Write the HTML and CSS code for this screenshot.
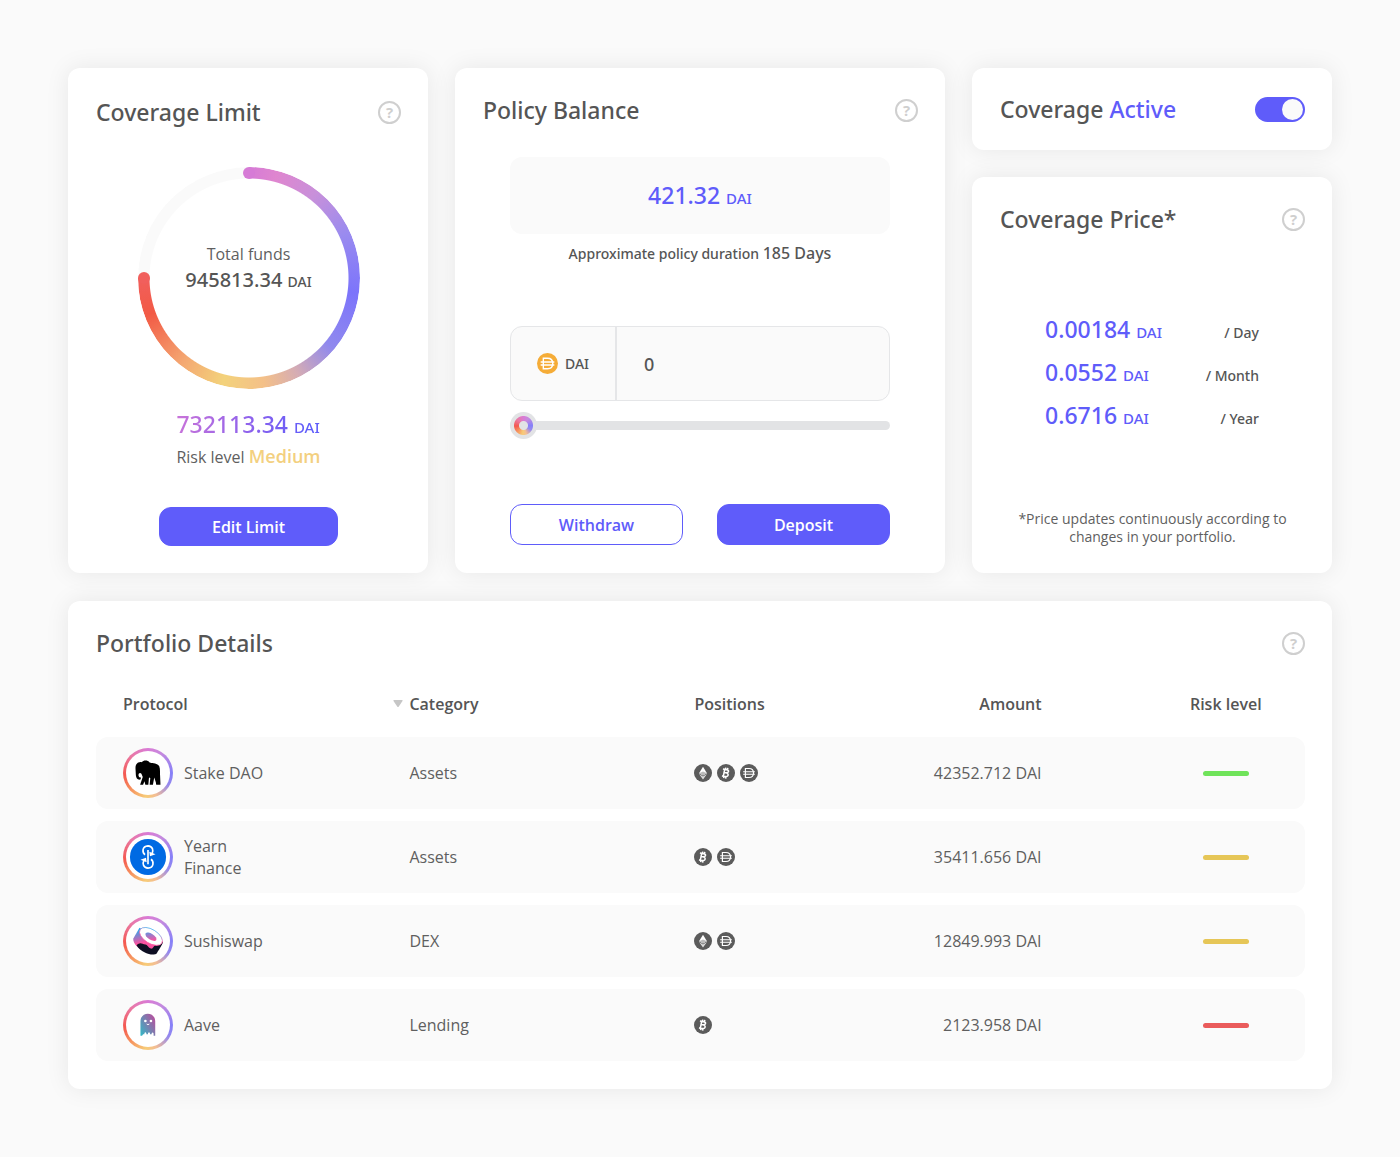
FILE: index.html
```html
<!DOCTYPE html>
<html lang="en">
<head>
<meta charset="utf-8">
<meta name="viewport" content="width=device-width, initial-scale=1">
<title>Coverage dashboard</title>
<link rel="stylesheet" href="styles.css">
</head>
<body>
<svg class="sprite" aria-hidden="true">
  <symbol id="coin-dai" viewBox="0 0 20 20">
    <circle cx="10" cy="10" r="10" fill="currentColor"/>
    <path d="M6 5h4c3 0 5 2 5 5s-2 5-5 5H6zM3.500 8.600h13M3.500 11.400h13" fill="none" stroke="#fff" stroke-width="1.300"/>
  </symbol>
  <symbol id="coin-btc" viewBox="0 0 20 20">
    <circle cx="10" cy="10" r="10" fill="currentColor"/>
    <path d="M8.600 5.800 7 13.800M6.600 5.600l4 .7c3.400.6 2.800 3.600-.6 3.400l-1.500-.2M10 9.800c3.600.6 3 4.600-.8 4.100l-3.700-.5M9.800 4l-.4 2M12 4.400l-.4 2M7.800 13.800l-.4 2M10 14.200l-.4 2" fill="none" stroke="#fff" stroke-width="1.700"/>
  </symbol>
  <symbol id="coin-eth" viewBox="0 0 20 20">
    <circle cx="10" cy="10" r="10" fill="currentColor"/>
    <path d="M10 3l4.400 7.200L10 12.700l-4.400-2.500z" fill="#fff"/>
    <path d="M5.600 11.200 10 13.800l4.400-2.600L10 17.200z" fill="#ddd"/>
    <path d="M5.600 10.200 10 8.300l4.400 1.900L10 12.700z" fill="#bbb"/>
  </symbol>
</svg>

<main class="dashboard">
  <section class="card limit">
    <header class="card-head">
      <h2>Coverage Limit</h2>
      <button class="help" type="button" aria-label="About coverage limit">?</button>
    </header>
    <div class="gauge">
      <div class="gauge-arc"></div>
      <p class="gauge-label">Total funds</p>
      <p class="gauge-value">945813.34 <small>DAI</small></p>
    </div>
    <div class="limit-info">
      <p class="limit-value">732113.34 <small>DAI</small></p>
      <p class="limit-risk">Risk level <strong>Medium</strong></p>
    </div>
    <button class="btn btn-edit" type="button">Edit Limit</button>
  </section>

  <section class="card policy">
    <header class="card-head">
      <h2>Policy Balance</h2>
      <button class="help" type="button" aria-label="About policy balance">?</button>
    </header>
    <div class="policy-body">
      <p class="balance amount">421.32 <small>DAI</small></p>
      <p class="duration">Approximate policy duration <strong>185 Days</strong></p>
      <div class="field">
        <label class="field-unit" for="amount"><svg class="unit-icon" aria-hidden="true"><use href="#coin-dai"/></svg>DAI</label>
        <input class="field-input" id="amount" type="text" inputmode="decimal" value="0">
      </div>
      <input class="slider" type="range" min="0" max="100" value="0" aria-label="Amount in DAI">
      <div class="actions">
        <button class="btn btn-outline" type="button">Withdraw</button>
        <button class="btn" type="button">Deposit</button>
      </div>
    </div>
  </section>

  <div class="side">
    <section class="card status">
      <h2><label for="active">Coverage <span class="accent">Active</span></label></h2>
      <input class="toggle" id="active" type="checkbox" role="switch" checked>
    </section>
    <section class="card price">
      <header class="card-head">
        <h2>Coverage Price*</h2>
        <button class="help" type="button" aria-label="About coverage price">?</button>
      </header>
      <dl class="prices">
        <div><dt>/ Day</dt><dd class="amount">0.00184 <small>DAI</small></dd></div>
        <div><dt>/ Month</dt><dd class="amount">0.0552 <small>DAI</small></dd></div>
        <div><dt>/ Year</dt><dd class="amount">0.6716 <small>DAI</small></dd></div>
      </dl>
      <p class="note">*Price updates continuously according to changes in your portfolio.</p>
    </section>
  </div>

  <section class="card portfolio">
    <header class="card-head">
      <h2>Portfolio Details</h2>
      <button class="help" type="button" aria-label="About portfolio details">?</button>
    </header>
    <table>
      <thead>
        <tr>
          <th class="col-protocol" scope="col">Protocol</th>
          <th class="col-category" scope="col" aria-sort="descending"><button class="sort" type="button"><svg viewBox="0 0 10 8" aria-hidden="true"><path d="M1 0h8q1 0 .5 1L5.800 6.500q-.8 1-1.600 0L.5 1Q0 0 1 0z"/></svg>Category</button></th>
          <th class="col-positions" scope="col">Positions</th>
          <th class="col-amount" scope="col">Amount</th>
          <th class="col-risk" scope="col">Risk level</th>
        </tr>
      </thead>
      <tbody>
        <tr>
          <td><div class="protocol">
            <span class="logo"><svg viewBox="121 393 134 134" aria-hidden="true">
              <path d="M150 448C149 434 156 425 169 427C174 421 187 420 193 428C204 431 217 430 222 439C226 449 224 460 225 472L226 496H213L212 489L207 474L203 496H193L195 475L191 474L189 496H180L177 485L173 496H164L172 472L168 462C164 458 159 460 159 467C160 473 163 474 167 474L165 480C156 482 152 476 151 467Z"/>
            </svg></span><span>Stake DAO</span></div></td>
          <td class="col-category">Assets</td>
          <td><div class="coins"><svg role="img" aria-label="ETH"><use href="#coin-eth"/></svg><svg role="img" aria-label="BTC"><use href="#coin-btc"/></svg><svg role="img" aria-label="DAI"><use href="#coin-dai"/></svg></div></td>
          <td class="col-amount">42352.712 DAI</td>
          <td class="col-risk"><span class="risk risk-low" role="img" aria-label="Low"></span></td>
        </tr>
        <tr>
          <td><div class="protocol">
            <span class="logo"><svg viewBox="121 644 134 134" aria-hidden="true">
              <circle cx="188" cy="711" r="55" fill="#006ae3"/>
              <g fill="none" stroke="#fff" stroke-width="5">
                <path d="M188 690V733"/>
                <path d="M179 704C170 698 169 678 188 677C202 678 206 690 200 702"/>
                <path d="M197 718C206 724 207 744 188 745C174 744 170 732 176 720"/>
              </g>
              <path d="M192 695l19 8-17 6zM184 727l-19-8 17-6z" fill="#fff"/>
            </svg></span><span>Yearn<br>Finance</span></div></td>
          <td class="col-category">Assets</td>
          <td><div class="coins"><svg role="img" aria-label="BTC"><use href="#coin-btc"/></svg><svg role="img" aria-label="DAI"><use href="#coin-dai"/></svg></div></td>
          <td class="col-amount">35411.656 DAI</td>
          <td class="col-risk"><span class="risk risk-medium" role="img" aria-label="Medium"></span></td>
        </tr>
        <tr>
          <td><div class="protocol">
            <span class="logo"><svg viewBox="121 86 134 134" aria-hidden="true">
              <defs>
                <linearGradient id="roll" x1="0" y1="0" x2="0.300" y2="1"><stop offset="0" stop-color="#03b8ff"/><stop offset=".65" stop-color="#fa52a0"/></linearGradient>
                <linearGradient id="filling" x1="0" y1="0" x2="1" y2="0.500"><stop offset="0" stop-color="#4f9be8"/><stop offset="1" stop-color="#fa52a0"/></linearGradient>
              </defs>
              <path d="M162 113L143 146C142 162 162 180 184 186L216 182L234 155Z" fill="url(#roll)"/>
              <path d="M153 166C155 163 158 161 161 161C166 158 172 162 180 164C188 166 189 175 197 176C205 178 204 167 211 167C221 168 229 163 234 154C233 163 224 176 215 190C209 197 192 195 180 189C168 183 158 175 153 166Z" fill="#0e0f23"/>
              <ellipse cx="197" cy="139" rx="39" ry="21" transform="rotate(32 197 139)" fill="#fff" stroke="url(#roll)" stroke-width="2"/>
              <ellipse cx="197" cy="140" rx="19" ry="9" transform="rotate(32 197 140)" fill="url(#filling)"/>
            </svg></span><span>Sushiswap</span></div></td>
          <td class="col-category">DEX</td>
          <td><div class="coins"><svg role="img" aria-label="ETH"><use href="#coin-eth"/></svg><svg role="img" aria-label="DAI"><use href="#coin-dai"/></svg></div></td>
          <td class="col-amount">12849.993 DAI</td>
          <td class="col-risk"><span class="risk risk-medium" role="img" aria-label="Medium"></span></td>
        </tr>
        <tr>
          <td><div class="protocol">
            <span class="logo"><svg viewBox="121 338 134 134" aria-hidden="true">
              <defs><linearGradient id="ghost" x1="0" y1="1" x2="1" y2="0.200"><stop offset="0" stop-color="#2ebac6"/><stop offset="1" stop-color="#b6509e"/></linearGradient></defs>
              <path d="M165 394C165 363 210 363 210 394V438H205V431Q202 424 199 431V433H194V430Q191 424 188 430V433H183V430Q180 424 177 430V433H173L170 438H165Z" fill="url(#ghost)"/>
              <g fill="#fff"><circle cx="180" cy="393" r="4"/><circle cx="197" cy="393" r="4"/></g>
              <path d="M184 402Q188 406 192 402" fill="none" stroke="#fff" stroke-width="3"/>
            </svg></span><span>Aave</span></div></td>
          <td class="col-category">Lending</td>
          <td><div class="coins"><svg role="img" aria-label="BTC"><use href="#coin-btc"/></svg></div></td>
          <td class="col-amount">2123.958 DAI</td>
          <td class="col-risk"><span class="risk risk-high" role="img" aria-label="High"></span></td>
        </tr>
      </tbody>
    </table>
  </section>
</main>
</body>
</html>
```
FILE: styles.css
```css
:root {
  --ink: #555;
  --soft: #5f5f5f;
  --accent: #5f5cfa;
  --panel: #fafafa;
  --medium: "Noto Sans", "Open Sans", sans-serif;
  --ring: conic-gradient(#d97bd6, #c58ade 35deg, #8680f8 90deg, #9589ee 120deg, #f3bd94 160deg, #f7cc78 185deg, #f6945f 225deg, #f4584f 265deg, #ea78a4 315deg, #d97bd6);
}

* { box-sizing: border-box; }

body {
  margin: 0;
  background: #fafafa;
  color: var(--ink);
  font: 16px/24px "Open Sans", "Noto Sans", sans-serif;
}

h2, p, dl, dd { margin: 0; }
h2 { font-family: var(--medium); font-size: 23px; line-height: 32px; font-weight: 500; }
button, input { font: inherit; color: inherit; }
button { cursor: pointer; }
small, strong { line-height: 1; }
small { font-size: 15px; }
.sprite { display: none; }
.accent { color: var(--accent); }

.dashboard {
  display: grid;
  grid-template-columns: minmax(0, 360fr) minmax(0, 490fr) minmax(0, 360fr);
  gap: 28px 27px;
  padding: 68px;
}

.card {
  display: flex;
  flex-direction: column;
  padding: 26px 27px 27px 28px;
  border-radius: 12px;
  background: #fff;
  box-shadow: 0 0 24px rgba(0, 0, 0, 0.08);
}

.card-head {
  display: flex;
  align-items: center;
  justify-content: space-between;
}

.help {
  width: 23px;
  height: 23px;
  padding: 0;
  border: 2px solid #cfcfcf;
  border-radius: 50%;
  background: none;
  color: #cfcfcf;
  font-size: 15px;
  line-height: 18px;
  font-weight: 700;
}

.btn {
  height: 41px;
  border: 1px solid var(--accent);
  border-radius: 12px;
  background: var(--accent);
  color: #fff;
  font-weight: 600;
}

.btn-outline { background: #fff; color: var(--accent); }

.amount { color: var(--accent); font-family: var(--medium); font-size: 23px; font-weight: 500; }

/* Coverage limit */
.limit { align-items: center; padding-top: 28px; }
.limit .card-head { align-self: stretch; }

.gauge {
  position: relative;
  display: flex;
  flex-direction: column;
  align-items: center;
  width: 222px;
  height: 222px;
  margin-top: 39px;
  padding-top: 75px;
}

.gauge-arc {
  position: absolute;
  inset: 0;
  border-radius: 50%;
  background: conic-gradient(#d67bd6, #df86cf 15deg, #c890da 38deg, #9a8bef 65deg, #7c74fb 98deg, #9089ee 130deg, #d5acb4 153deg, #f4c088 172deg, #f3d27b 194deg, #f4a872 218deg, #f25a45 250deg, #f15f5c 270deg, #fafafa 270deg);
  -webkit-mask: radial-gradient(circle, transparent 99px, #000 100px);
  mask: radial-gradient(circle, transparent 99px, #000 100px);
}

/* round caps at both ends of the arc */
.gauge::before,
.gauge::after {
  content: "";
  position: absolute;
  z-index: 1;
  width: 12px;
  height: 12px;
  border-radius: 50%;
}
.gauge::before { top: 0; left: calc(50% - 6px); background: #d67bd6; }
.gauge::after { left: 0; top: calc(50% - 6px); background: #f15f5c; }

.gauge-label { color: var(--soft); }
.gauge-value { font-family: var(--medium); font-size: 20px; line-height: 28px; font-weight: 500; }
.gauge-value small { font-size: 14px; }

.limit-info { margin: 19px 0 38px; }
.limit-value {
  width: fit-content;
  font-family: var(--medium);
  font-size: 23px;
  line-height: 32px;
  font-weight: 500;
  color: transparent;
  background: linear-gradient(100deg, #cb74d8, #8f62ec 50%, #5f5cfa 90%);
  -webkit-background-clip: text;
  background-clip: text;
}
.limit-risk { margin-top: 5px; color: var(--soft); }
.limit-risk strong { color: #f3d080; font-size: 18px; font-weight: 600; }
.btn-edit { width: 179px; height: 39px; margin-top: auto; }

/* Policy balance */
.policy-body {
  display: flex;
  flex: 1;
  flex-direction: column;
  margin-top: 31px;
  padding: 0 28px 0 27px;
}
.balance {
  border-radius: 12px;
  background: var(--panel);
  line-height: 77px;
  text-align: center;
}
.duration { margin-top: 8px; font-family: var(--medium); font-size: 14px; font-weight: 500; text-align: center; }
.duration strong { font-size: 16px; font-weight: 500; }

.field {
  display: flex;
  height: 75px;
  margin-top: 60px;
  overflow: hidden;
  border: 1px solid #e5e6e8;
  border-radius: 12px;
  background: var(--panel);
  font-family: var(--medium);
  font-weight: 500;
}
.field-unit {
  display: flex;
  align-items: center;
  justify-content: center;
  gap: 7px;
  width: 106px;
  border-right: 2px solid #e5e6e8;
  font-size: 14px;
}
.unit-icon { width: 21px; height: 21px; color: #f5ac37; }
.field-input {
  flex: 1;
  min-width: 0;
  padding: 0 27px;
  border: 0;
  background: none;
  font-size: 18px;
}

.slider {
  width: 100%;
  height: 27px;
  margin: 11px 0 0;
  appearance: none;
  background: none;
}
.slider::-webkit-slider-runnable-track {
  height: 9px;
  border-radius: 5px;
  background: #e2e3e5;
}
.slider::-webkit-slider-thumb {
  width: 27px;
  height: 27px;
  margin-top: -9px;
  appearance: none;
  border-radius: 50%;
  background:
    radial-gradient(circle, #e2e3e5 4px, transparent 5px 9px, #e2e3e5 10px),
    var(--ring);
}

.actions {
  display: grid;
  grid-template-columns: 1fr 1fr;
  gap: 34px;
  margin-top: auto;
  padding-bottom: 1px;
}

/* Right column */
.side { display: flex; flex-direction: column; gap: 27px; }
.status {
  flex-direction: row;
  align-items: center;
  justify-content: space-between;
  padding: 25px 27px 25px 28px;
}
.toggle {
  display: flex;
  align-items: center;
  justify-content: flex-start;
  width: 50px;
  height: 25px;
  margin: 0;
  padding: 2px;
  appearance: none;
  border-radius: 13px;
  background: #cfcfcf;
  cursor: pointer;
}
.toggle::before {
  content: "";
  width: 21px;
  height: 21px;
  border-radius: 50%;
  background: #fafafa;
}
.toggle:checked { justify-content: flex-end; background: var(--accent); }

.price { flex: 1; }
.prices { margin: 73px 46px 0 45px; }
.prices div {
  display: flex;
  flex-direction: row-reverse;
  align-items: baseline;
  justify-content: space-between;
  line-height: 43px;
}
.prices dt { font-family: var(--medium); line-height: 24px; font-size: 14px; font-weight: 500; }
.note {
  margin-top: auto;
  padding: 0 16px;
  color: var(--soft);
  font-size: 14px;
  line-height: 18px;
  text-align: center;
}

/* Portfolio */
.portfolio { grid-column: 1 / -1; padding-bottom: 16px; }

table {
  width: 100%;
  margin-top: 11px;
  table-layout: fixed;
  border-collapse: separate;
  border-spacing: 0 12px;
}
th, td { padding: 0; text-align: left; vertical-align: middle; }
th { height: 43px; font-weight: 600; }
td { height: 72px; background: var(--panel); color: var(--soft); }
tr > :first-child { padding-left: 27px; border-radius: 12px 0 0 12px; }
tr > :last-child { border-radius: 0 12px 12px 0; }
th.col-protocol { width: 24.6%; }
th.col-category { width: 24.9%; }
th.col-positions { width: 16%; }
th.col-amount { width: 21.4%; }
th.col-risk { width: 13.1%; }
td.col-category { padding-left: 16px; }
tr > .col-amount { padding-right: 105px; text-align: right; white-space: nowrap; }
tr > .col-risk { text-align: center; }

.sort {
  display: flex;
  align-items: center;
  gap: 6px;
  padding: 0;
  border: 0;
  background: none;
}
.sort svg { width: 10px; height: 8px; fill: #c6c6c6; }

.protocol { display: flex; align-items: center; gap: 11px; line-height: 22px; }
.logo {
  display: flex;
  width: 50px;
  height: 50px;
  padding: 3px;
  border-radius: 50%;
  background: var(--ring);
}
.logo svg { flex: 1; border-radius: 50%; background: #fff; }

.coins { display: flex; gap: 5px; color: #5b5b5b; }
.coins svg { width: 18px; height: 18px; }

.risk {
  display: block;
  width: 46px;
  height: 5px;
  margin: 0 auto;
  border-radius: 3px;
}
.risk-low { background: #6fe35a; }
.risk-medium { background: #e6c657; }
.risk-high { background: #ea5b5b; }
```
